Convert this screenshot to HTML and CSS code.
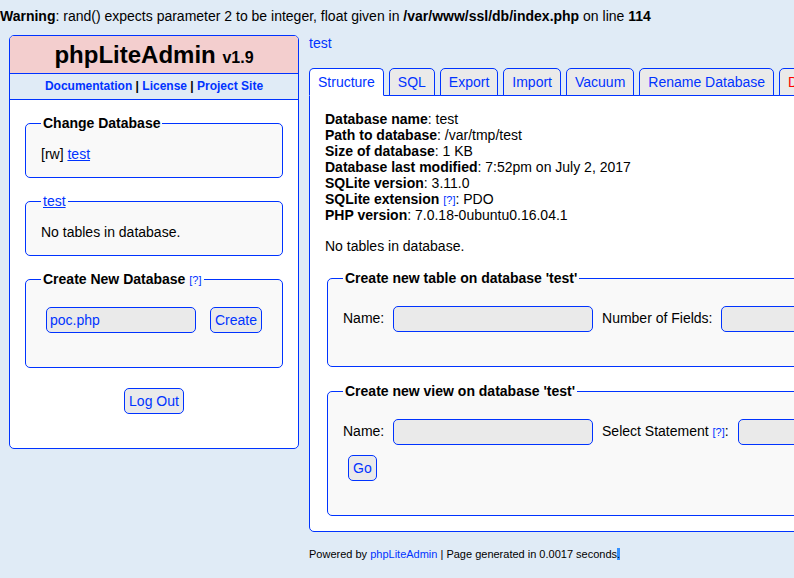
FILE: index.html
```html
<!DOCTYPE html>
<html>
<head>
<meta charset="utf-8">
<title>phpLiteAdmin</title>
<link rel="stylesheet" href="styles.css">
</head>
<body>
<div class="warning"><b>Warning</b>: rand() expects parameter 2 to be integer, float given in <b>/var/www/ssl/db/index.php</b> on line <b>114</b></div>
<div class="container">
  <aside class="leftnav">
    <h1 class="title">phpLiteAdmin <span class="version">v1.9</span></h1>
    <div class="headerlinks"><a href="#">Documentation</a> | <a href="#">License</a> | <a href="#">Project Site</a></div>
    <div class="navbody">
      <fieldset class="fs">
        <legend>Change Database</legend>
        <div>[rw] <a href="#" class="ul">test</a></div>
      </fieldset>
      <fieldset class="fs">
        <legend class="plain"><a href="#" class="ul">test</a></legend>
        <div>No tables in database.</div>
      </fieldset>
      <fieldset class="fs fs-form">
        <legend>Create New Database <a href="#" class="helpq">[?]</a></legend>
        <div class="formrow"><input type="text" class="in-db" value="poc.php"> <button class="btn">Create</button></div>
      </fieldset>
      <div class="logout"><button class="btn">Log Out</button></div>
    </div>
  </aside>
  <main class="content">
    <div class="dbtitle"><a href="#">test</a></div>
    <nav class="tabs">
      <a href="#" class="tab active">Structure</a>
      <a href="#" class="tab">SQL</a>
      <a href="#" class="tab">Export</a>
      <a href="#" class="tab">Import</a>
      <a href="#" class="tab">Vacuum</a>
      <a href="#" class="tab">Rename Database</a>
      <a href="#" class="tab danger">Delete Database</a>
    </nav>
    <section class="panel">
      <div class="info">
        <b>Database name</b>: test<br>
        <b>Path to database</b>: /var/tmp/test<br>
        <b>Size of database</b>: 1 KB<br>
        <b>Database last modified</b>: 7:52pm on July 2, 2017<br>
        <b>SQLite version</b>: 3.11.0<br>
        <b>SQLite extension</b> <a href="#" class="helpq">[?]</a>: PDO<br>
        <b>PHP version</b>: 7.0.18-0ubuntu0.16.04.1
      </div>
      <p class="notables">No tables in database.</p>
      <fieldset class="fs fs-form fs-main">
        <legend>Create new table on database 'test'</legend>
        <div class="formrow">Name: <input type="text" class="in-name"> Number of Fields: <input type="text" class="in-name"></div>
      </fieldset>
      <fieldset class="fs fs-form fs-main fs-second">
        <legend>Create new view on database 'test'</legend>
        <div class="formrow">Name: <input type="text" class="in-name"> Select Statement <a href="#" class="helpq">[?]</a>: <input type="text" class="in-name"></div>
        <div class="formrow"><button class="btn">Go</button></div>
      </fieldset>
    </section>
    <div class="footer">Powered by <a href="#">phpLiteAdmin</a> | Page generated in 0.0017 seconds<span class="sel">.</span></div>
  </main>
</div>
</body>
</html>
```

FILE: styles.css
```css
* { box-sizing: border-box; }
html, body { margin: 0; padding: 0; overflow: hidden; }
body {
  width: 794px;
  height: 578px;
  font-family: "Liberation Sans", Arial, sans-serif;
  font-size: 14px;
  line-height: 16px;
  color: #000;
  background: #e0ebf6;
}
a { color: #03f; text-decoration: none; }
a.ul { text-decoration: underline; }
.helpq { font-size: 11px; font-weight: normal; line-height: 1; }

.warning { padding-top: 8px; white-space: nowrap; }

.container {
  display: flex;
  align-items: flex-start;
  gap: 10px;
  padding: 11px 0 0 9px;
}

.leftnav {
  flex: none;
  width: 290px;
  background: #fff;
  border: 1px solid #03f;
  border-radius: 5px;
  padding-bottom: 29px;
}
.title {
  margin: 0;
  padding: 5px;
  background: #f3cece;
  border-bottom: 1px solid #03f;
  border-radius: 4px 4px 0 0;
  text-align: center;
  font-size: 24px;
  line-height: 27px;
  font-weight: bold;
}
.version { font-size: 16px; line-height: 1; }
.headerlinks {
  padding: 5px 15px;
  background: #e0ebf6;
  border-bottom: 1px solid #03f;
  text-align: center;
  font-size: 12px;
  line-height: 15px;
  font-weight: bold;
}
.navbody {
  display: flex;
  flex-direction: column;
  gap: 15px;
  padding: 15px 15px 0;
}

.fs {
  margin: 0;
  min-width: 0;
  padding: 15px 15px 15px;
  border: 1px solid #03f;
  border-radius: 5px;
  background: #f9f9f9;
}
.fs legend {
  padding: 0 2px;
  font-weight: bold;
  line-height: 16px;
}
.fs legend.plain { font-weight: normal; }
.fs-form { padding-bottom: 29px; }

input, button {
  font-family: "Liberation Sans", Arial, sans-serif;
  font-size: 14px;
  line-height: 16px;
  height: 26px;
  color: #03f;
  background: #eaeaea;
  border: 1px solid #03f;
  border-radius: 5px;
  margin: 5px;
  padding: 4px 3px;
  vertical-align: middle;
}
.btn { padding: 4px 4px; }
.in-db { width: 150px; }
.in-name { width: 200px; }
.formrow { white-space: nowrap; }
.logout { text-align: center; }

.content {
  flex: none;
  width: 620px;
}
.dbtitle { margin-bottom: 17px; }
.tabs {
  display: flex;
  gap: 5px;
  white-space: nowrap;
}
.tab {
  flex: none;
  padding: 5px 8px;
  border: 1px solid #03f;
  border-radius: 5px 5px 0 0;
  background: #eaeaea;
  margin-bottom: -1px;
  line-height: 16px;
}
.tab.active {
  position: relative;
  z-index: 1;
  background: #fff;
  border-bottom-color: #fff;
}
.tab.danger { color: #f00; }
.panel {
  background: #fff;
  border: 1px solid #03f;
  border-radius: 0 5px 5px 5px;
  padding: 15px 0 15px 15px;
}
.notables { margin: 15px 0 0; }
.fs-main { margin: 16px 0 0 2px; padding-bottom: 29px; }
.fs-second { margin-top: 16px; }

.footer {
  margin-top: 15px;
  font-size: 11px;
  line-height: 15px;
}
.sel { background: #3390ff; }
```
